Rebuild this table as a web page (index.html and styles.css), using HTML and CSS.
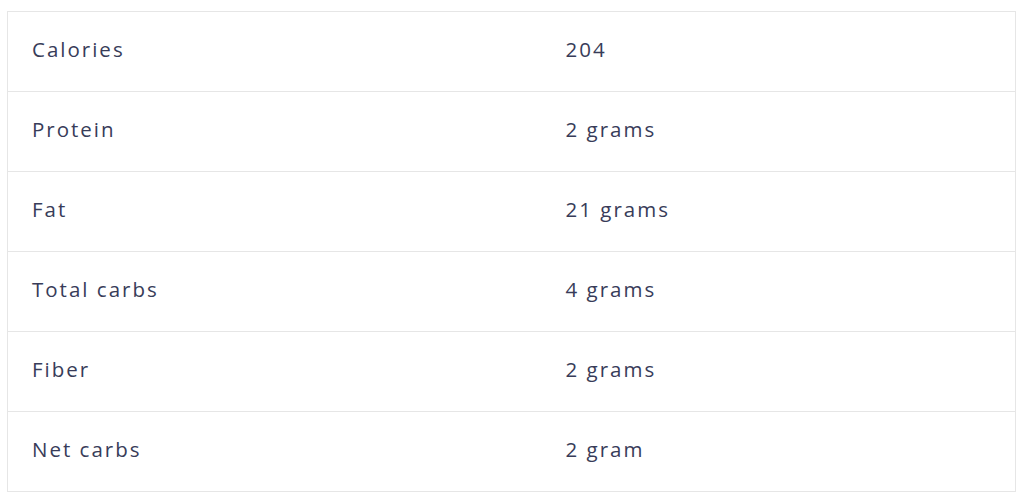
FILE: index.html
```html
<!DOCTYPE html>
<html>
<head>
<meta charset="utf-8">
<link rel="stylesheet" href="styles.css">
</head>
<body>
<div class="wrap">
<table class="nutrition">
<tbody>
<tr><td class="label">Calories</td><td class="value">204</td></tr>
<tr><td class="label">Protein</td><td class="value">2 grams</td></tr>
<tr><td class="label">Fat</td><td class="value">21 grams</td></tr>
<tr><td class="label">Total carbs</td><td class="value">4 grams</td></tr>
<tr><td class="label">Fiber</td><td class="value">2 grams</td></tr>
<tr><td class="label">Net carbs</td><td class="value">2 gram</td></tr>
</tbody>
</table>
</div>
</body>
</html>
```
FILE: styles.css
```css
html, body {
  margin: 0;
  padding: 0;
  background: #ffffff;
}
.wrap {
  padding: 11px 8px 0 7px;
}
.nutrition {
  width: 1009px;
  border-collapse: collapse;
  border: 1px solid #e6e6e6;
  font-family: "Open Sans", "Noto Sans", sans-serif;
  font-size: 20.5px;
  color: #383c59;
  letter-spacing: 2px;
}
.nutrition td {
  height: 80px;
  padding: 0 24px 6px 24px;
  border-bottom: 1px solid #e6e6e6;
  vertical-align: middle;
  box-sizing: border-box;
  line-height: 24px;
}
.nutrition td.label {
  width: 534px;
}
```
